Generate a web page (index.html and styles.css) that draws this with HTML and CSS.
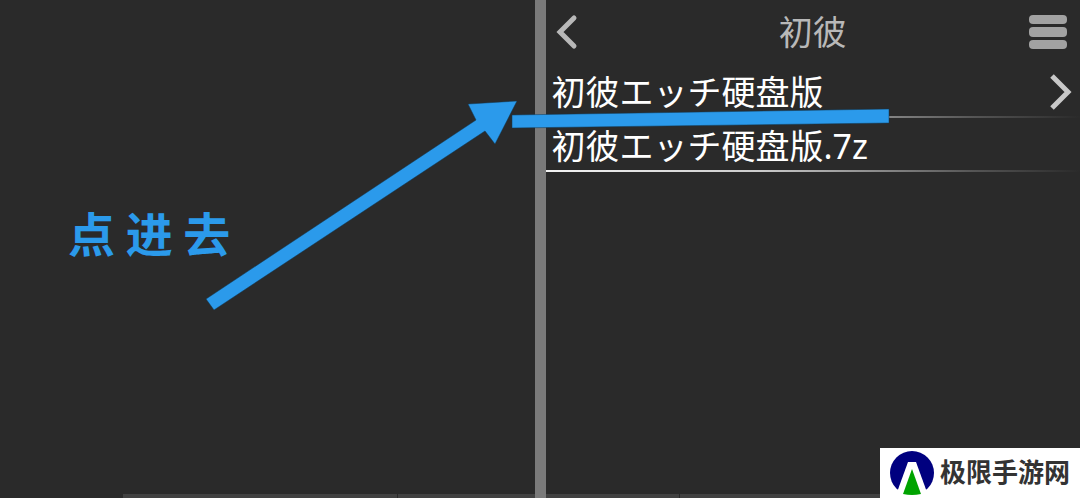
FILE: index.html
```html
<!DOCTYPE html>
<html lang="zh-CN">
<head>
  <meta charset="UTF-8">
  <meta name="viewport" content="width=device-width, initial-scale=1.0">
  <title>初彼</title>
  <link rel="stylesheet" href="styles.css">
</head>
<body>
  <div class="screen">
    <section class="pane pane-left">
      <div class="dock">
        <span class="dock-wide"></span>
        <span class="dock-short"></span>
      </div>
    </section>
    <div class="divider"></div>
    <main class="pane pane-right">
      <header class="topbar">
        <button type="button" class="icon-button" aria-label="返回">
          <svg width="40" height="44" viewBox="0 0 40 44">
            <path d="M24 8 L10 22 L24 36" fill="none" stroke="#b8b8b8" stroke-width="5" stroke-linecap="round"/>
          </svg>
        </button>
        <h1>初彼</h1>
        <button type="button" class="icon-button" aria-label="菜单">
          <svg width="40" height="44" viewBox="0 0 40 44">
            <g fill="#a2a2a2">
              <rect x="1" y="5" width="38" height="9" rx="4"/>
              <rect x="1" y="17" width="38" height="10" rx="4"/>
              <rect x="1" y="30" width="38" height="9" rx="4"/>
            </g>
          </svg>
        </button>
      </header>
      <ul class="file-list">
        <li>
          <a href="#folder" class="file">
            <span>初彼エッチ硬盘版</span>
            <svg width="22" height="36" viewBox="0 0 22 36">
              <path d="M2 2 L18 18 L2 34" fill="none" stroke="#c8c8c8" stroke-width="5"/>
            </svg>
          </a>
        </li>
        <li>
          <a href="#archive" class="file">
            <span>初彼エッチ硬盘版.7z</span>
          </a>
        </li>
      </ul>
      <div class="dock">
        <span class="dock-short"></span>
        <span class="dock-wide"></span>
      </div>
    </main>

    <!-- hand-drawn notes on top of the file browser -->
    <svg class="marks" viewBox="0 0 1080 498" aria-hidden="true">
      <g fill="#2b9aeb" stroke="#123752" stroke-opacity="0.5" stroke-width="1">
        <path d="M206 299 L476 120 L468 104 L517 101 L495 144 L485 131 L214 310 Z"/>
        <path d="M512 115 L889 109 L889 123 L512 128 Z"/>
      </g>
    </svg>
    <p class="note">点 进 去</p>

    <div class="brand">
      <svg width="44" height="44" viewBox="0 0 44 44" aria-hidden="true">
        <circle cx="22" cy="22" r="22" fill="#00007f"/>
        <path d="M18 11 H26 L38 44 H6 Z" fill="#ffffff"/>
        <path d="M22 18 L31 43 Q22 45 13 43 Z" fill="#00a300"/>
      </svg>
      <span>极限手游网</span>
    </div>
  </div>
</body>
</html>
```

FILE: styles.css
```css
* {
  box-sizing: border-box;
}

body {
  margin: 0;
  background: #2a2a2a;
  color: #ffffff;
  font-family: "Noto Sans", "Noto Sans CJK SC", sans-serif;
}

.screen {
  position: relative;
  display: grid;
  grid-template-columns: 1fr 11px 1fr;
  min-height: 100vh;
  overflow: hidden;
}

.pane {
  display: flex;
  flex-direction: column;
  min-width: 0;
}

.divider {
  background: #7a7a7a;
}

/* top bar */
.topbar {
  display: flex;
  align-items: center;
  justify-content: space-between;
  height: 64px;
  padding: 0 12px;
}

.topbar h1 {
  margin: 0;
  color: #b8b8b8;
  font-size: 34px;
  font-weight: 400;
  line-height: 64px;
}

.icon-button {
  display: flex;
  padding: 0;
  border: none;
  background: none;
  cursor: pointer;
}

.icon-button:first-child {
  margin-left: -8px;
  padding-right: 8px;
}

/* file list */
.file-list {
  margin: 0;
  padding: 0;
  list-style: none;
}

.file {
  display: flex;
  align-items: center;
  justify-content: space-between;
  height: 54px;
  padding: 4px 8px 0 6px;
  border-bottom: 2px solid;
  border-image: linear-gradient(to right, #f4f4f4, #cccccc 40%, #555555 80%, #2a2a2a) 1;
  color: #ffffff;
  font-size: 34px;
  line-height: 48px;
  text-decoration: none;
  white-space: nowrap;
}

/* bottom edge */
.dock {
  display: flex;
  gap: 1px;
  height: 4px;
  margin-top: auto;
}

.pane-left .dock {
  margin-left: 23%;
}

.dock span {
  background: #414141;
}

.dock-wide {
  flex: 2;
}

.dock-short {
  flex: 1;
}

.pane-right .dock-wide {
  flex: 3;
}

/* notes */
.marks {
  position: absolute;
  top: 0;
  left: 0;
  width: 100%;
  pointer-events: none;
}

.note {
  position: absolute;
  top: 202px;
  left: 68px;
  margin: 0;
  color: #2b9aeb;
  font-family: "Noto Sans CJK SC", sans-serif;
  font-size: 47px;
  font-weight: 700;
  line-height: 60px;
}

.brand {
  position: absolute;
  right: 0;
  bottom: 0;
  display: flex;
  align-items: center;
  gap: 6px;
  height: 50px;
  padding: 0 10px;
  background: #ffffff;
  color: #333333;
  font-family: "Noto Sans CJK SC", sans-serif;
  font-size: 26px;
  font-weight: 700;
  line-height: 44px;
  white-space: nowrap;
}

.brand span {
  padding-bottom: 4px;
}
```
